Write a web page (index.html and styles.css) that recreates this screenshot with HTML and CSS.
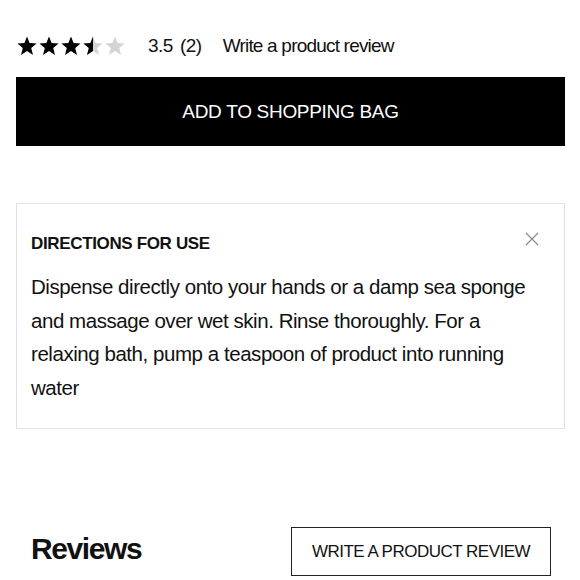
FILE: index.html
```html
<!DOCTYPE html>
<html lang="en">
<head>
    <meta charset="UTF-8">
    <meta name="viewport" content="width=device-width, initial-scale=1.0">
    <link rel="stylesheet" href="styles.css">
    <title>Product</title>
</head>
<body>
    <div class="rating">
        <div class="stars">
            <svg width="110" height="22" viewBox="0 0 110 22">
                <defs>
                    <path id="star" d="M11 1.5l2.6 6.6 7 .4-5.4 4.5 1.8 6.9L11 16l-6 3.9 1.8-6.9L1.4 8.5l7-.4z"/>
                    <clipPath id="half"><rect x="0" y="0" width="11" height="22"/></clipPath>
                </defs>
                <use href="#star" x="0" fill="#000"/>
                <use href="#star" x="22" fill="#000"/>
                <use href="#star" x="44" fill="#000"/>
                <use href="#star" x="66" fill="#d4d4d4"/>
                <use href="#star" x="66" fill="#000" clip-path="url(#half)"/>
                <use href="#star" x="88" fill="#d4d4d4"/>
            </svg>
        </div>
        <span class="score">3.5</span>
        <span class="count">(2)</span>
        <a class="write-link" href="#">Write a product review</a>
    </div>

    <button class="add-btn">ADD TO SHOPPING BAG</button>

    <div class="panel">
        <div class="panel-head">
            <h3>DIRECTIONS FOR USE</h3>
            <svg class="close" width="14" height="14" viewBox="0 0 14 14">
                <path d="M1 1l12 12M13 1L1 13" stroke="#888" stroke-width="1.2" fill="none"/>
            </svg>
        </div>
        <p>Dispense directly onto your hands or a damp sea sponge and massage over wet skin. Rinse thoroughly. For a relaxing bath, pump a teaspoon of product into running water</p>
    </div>

    <div class="reviews-head">
        <h2>Reviews</h2>
        <button class="review-btn">WRITE A PRODUCT REVIEW</button>
    </div>
</body>
</html>
```

FILE: styles.css
```css
body {
    font-family: 'Liberation Sans', Arial, sans-serif;
    color: #111;
    background-color: #fff;
    margin: 0;
    padding: 0 15px 0 16px;
}

.rating {
    display: flex;
    align-items: center;
    height: 24px;
    margin-top: 34px;
    font-size: 19px;
    letter-spacing: -0.5px;
}

.stars {
    display: flex;
    width: 132px;
}

.stars svg {
    display: block;
}

.count {
    margin-left: 7px;
}

.write-link {
    margin-left: 21px;
    color: #111;
    text-decoration: none;
    letter-spacing: -0.8px;
}

.add-btn {
    display: block;
    width: 100%;
    height: 69px;
    margin-top: 19px;
    background-color: #000;
    color: #fff;
    border: none;
    font-family: inherit;
    font-size: 19px;
    letter-spacing: -0.3px;
}

.panel {
    margin-top: 57px;
    border: 1px solid #e2e2e2;
    padding: 30px 15px 24px 14px;
}

.panel-head {
    display: flex;
    justify-content: space-between;
    align-items: center;
}

.panel-head h3 {
    margin: 0;
    font-size: 17px;
    font-weight: bold;
    letter-spacing: -0.35px;
}

.close {
    margin-right: 10px;
    margin-top: -10px;
}

.panel p {
    margin: 16px 0 0;
    font-size: 20.5px;
    line-height: 33.5px;
    letter-spacing: -0.45px;
}

.reviews-head {
    display: flex;
    justify-content: space-between;
    align-items: center;
    margin-top: 98px;
    padding: 0 14px 0 15px;
}

.reviews-head h2 {
    margin: 0 0 6px;
    font-size: 30px;
    font-weight: bold;
    letter-spacing: -1.4px;
}

.review-btn {
    width: 260px;
    height: 49px;
    background: #fff;
    border: 1.5px solid #222;
    font-family: inherit;
    font-size: 17px;
    letter-spacing: -0.5px;
    color: #111;
    padding: 0;
}
```
